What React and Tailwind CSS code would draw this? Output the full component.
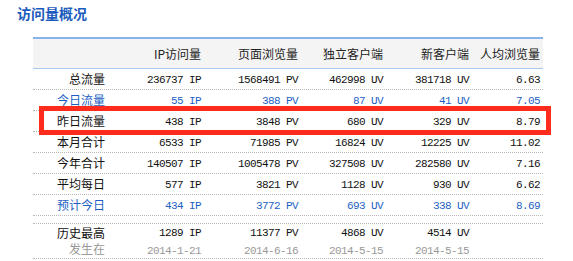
const cols = ["w-[75px]", "w-[96px]", "w-[97px]", "w-[85px]", "w-[86px]", "w-[71px]"];

const rows = [
  { label: "总流量", v: ["236737 IP", "1568491 PV", "462998 UV", "381718 UV", "6.63"] },
  { label: "今日流量", v: ["55 IP", "388 PV", "87 UV", "41 UV", "7.05"], blue: true },
  { label: "昨日流量", v: ["438 IP", "3848 PV", "680 UV", "329 UV", "8.79"] },
  { label: "本月合计", v: ["6533 IP", "71985 PV", "16824 UV", "12225 UV", "11.02"] },
  { label: "今年合计", v: ["140507 IP", "1005478 PV", "327508 UV", "282580 UV", "7.16"] },
  { label: "平均每日", v: ["577 IP", "3821 PV", "1128 UV", "930 UV", "6.62"] },
  { label: "预计今日", v: ["434 IP", "3772 PV", "693 UV", "338 UV", "8.69"], blue: true },
];

const Num = ({ children }) => (
  <span className="font-['Liberation_Mono',monospace] text-[11px] tracking-[-0.6px]">{children}</span>
);

export default function App() {
  return (
    <div className="relative w-[573px] h-[261px] bg-white overflow-hidden font-['Noto_Sans_CJK_SC',sans-serif] text-[12px] text-[#111]">
      <h1 className="pl-[17px] pt-[5px] h-[37px] text-[14px] font-bold leading-[17px] text-[#1a5bbd]">
        访问量概况
      </h1>

      <div className="ml-[33px] w-[510px]">
        <div className="flex h-[32px] items-center border-t-2 border-b border-t-[#86b4ea] border-b-[#a9c8ee] bg-[#f4f4f4] text-[#222]">
          <div className={cols[0]} />
          {["IP访问量", "页面浏览量", "独立客户端", "新客户端", "人均浏览量"].map((h, i) => (
            <div key={h} className={`${cols[i + 1]} pr-[3px] text-right`}>
              {h}
            </div>
          ))}
        </div>

        {rows.map((r) => (
          <div
            key={r.label}
            className={`flex h-[21px] items-center border-b border-dotted border-[#b8b8b8] ${r.blue ? "text-[#1d5fc4]" : ""}`}
          >
            <div className={`${cols[0]} pr-[3px] text-right`}>{r.label}</div>
            {r.v.map((x, i) => (
              <div key={i} className={`${cols[i + 1]} pr-[3px] text-right`}>
                <Num>{x}</Num>
              </div>
            ))}
          </div>
        ))}

        <div className="h-[8px] border-b border-dotted border-[#b8b8b8]" />

        <div className="flex h-[35px] items-center border-b border-dotted border-[#b8b8b8] leading-[16px]">
          <div className={`${cols[0]} pr-[3px] text-right`}>
            <div>历史最高</div>
            <div className="text-[#999]">发生在</div>
          </div>
          {[
            ["1289 IP", "2014-1-21"],
            ["11377 PV", "2014-6-16"],
            ["4868 UV", "2014-5-15"],
            ["4514 UV", "2014-5-15"],
          ].map(([a, b], i) => (
            <div key={i} className={`${cols[i + 1]} pr-[3px] text-right`}>
              <div><Num>{a}</Num></div>
              <div className="text-[#999]"><Num>{b}</Num></div>
            </div>
          ))}
          <div className={cols[5]} />
        </div>
      </div>

      <div className="absolute left-[39px] top-[106px] w-[512px] h-[29px] border-[5px] border-[#ff2b1c]" />
    </div>
  );
}
